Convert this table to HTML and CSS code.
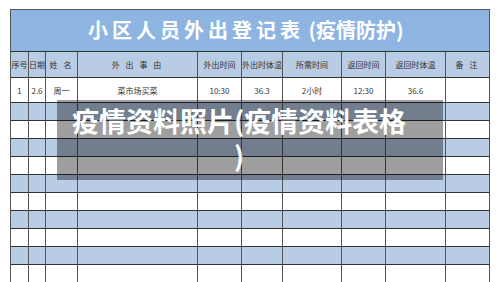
FILE: index.html
```html
<!DOCTYPE html>
<html lang="zh">
<head>
<meta charset="utf-8">
<link rel="stylesheet" href="styles.css">
</head>
<body>
<div class="page">
  <div class="sheet">
    <div class="title"><span class="spaced">小区人员外出登记表</span> (疫情防护)</div>
    <div class="grid">
      <div class="c h">序号</div><div class="c h">日期</div><div class="c h sp">姓 名</div><div class="c h sp">外 出 事 由</div><div class="c h">外出时间</div><div class="c h">外出时体温</div><div class="c h">所需时间</div><div class="c h">返回时间</div><div class="c h">返回时体温</div><div class="c h sp">备 注</div>
      <div class="c r1">1</div><div class="c r1">2.6</div><div class="c r1">周一</div><div class="c r1">菜市场买菜</div><div class="c r1">10:30</div><div class="c r1">36.3</div><div class="c r1">2小时</div><div class="c r1">12:30</div><div class="c r1">36.6</div><div class="c r1"></div>
    </div>
    <div class="rows" id="rows"></div>
  </div>
  <div class="overlay"><div class="ovtext">疫情资料照片(疫情资料表格)</div></div>
</div>
<script>
  var rows = document.getElementById('rows');
  for (var i = 0; i < 10; i++) {
    var cls = i % 2 === 0 ? 'blue' : 'white';
    for (var j = 0; j < 10; j++) {
      var d = document.createElement('div');
      d.className = 'c e ' + cls;
      rows.appendChild(d);
    }
  }
</script>
</body>
</html>
```

FILE: styles.css
```css
html, body {
  margin: 0;
  padding: 0;
  background: #ffffff;
  overflow: hidden;
}
.page {
  position: relative;
  width: 500px;
  height: 282px;
  overflow: hidden;
  font-family: "Noto Sans CJK SC", "Noto Sans", sans-serif;
}
.sheet {
  margin: 9px 0 0 10px;
  width: 480px;
  border-top: 1px solid #555;
  border-left: 1px solid #555;
  box-sizing: border-box;
}
.title {
  height: 42px;
  box-sizing: border-box;
  background: #8eb4e2;
  border-right: 1px solid #555;
  border-bottom: 1px solid #333;
  color: #ffffff;
  font-size: 20px;
  font-weight: 700;
  line-height: 40px;
  padding-left: 77px;
  white-space: nowrap;
}
.spaced {
  letter-spacing: 4px;
}
.grid, .rows {
  display: grid;
  grid-template-columns: 18px 17px 32px 120px 44px 41px 59px 44px 60px 44px;
}
.c {
  box-sizing: border-box;
  border-right: 1px solid #555;
  border-bottom: 1px solid #333;
  font-size: 8px;
  color: #333;
  display: flex;
  align-items: center;
  justify-content: center;
  white-space: nowrap;
  overflow: hidden;
}
.h {
  height: 26px;
  background: #b8cce4;
}
.sp {
  letter-spacing: 2px;
}
.r1 {
  height: 25px;
  background: #ffffff;
}
.e {
  height: 18px;
}
.blue {
  background: #b8cce4;
}
.white {
  background: #ffffff;
}
.overlay {
  position: absolute;
  left: 57px;
  top: 100px;
  width: 386px;
  height: 80px;
  background: rgba(0, 0, 0, 0.38);
  box-sizing: border-box;
  padding: 3px 0 0 13px;
}
.ovtext {
  width: 338px;
  text-align: center;
  color: #ffffff;
  font-size: 27px;
  font-weight: 700;
  line-height: 35px;
  line-break: anywhere;
}
```
